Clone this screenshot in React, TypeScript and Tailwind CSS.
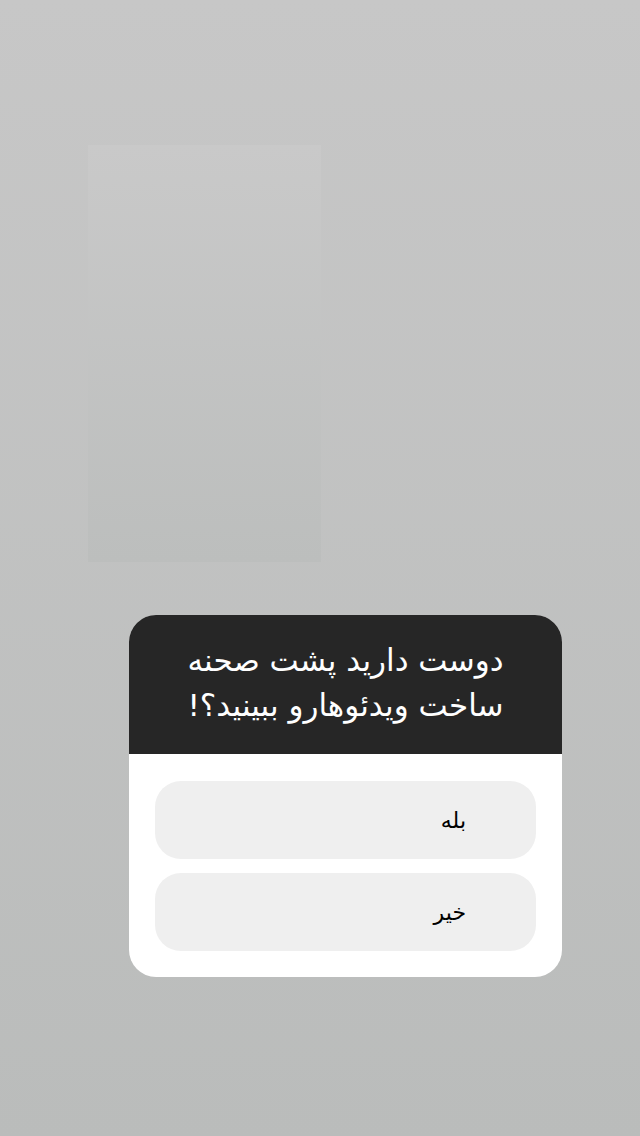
const options = ['بله', 'خیر'];

const App = () => {
  return (
    <div className="min-h-[1136px] w-[640px] bg-gradient-to-b from-[#c7c7c7] to-[#babcbb] pt-[145px] pl-[88px]">
      {/* faded media frame behind the sticker */}
      <div className="w-[233px] h-[417px] bg-gradient-to-b from-[#c9c9c9] to-[#bcbebd]" />

      {/* question sticker */}
      <div
        dir="rtl"
        className="mt-[53px] ml-[41px] w-[433px] rounded-[27px] overflow-hidden bg-white"
        style={{ fontFamily: '"DejaVu Sans", sans-serif' }}
      >
        <div className="h-[139px] bg-[#262626] flex flex-col items-center justify-center pb-[4px]">
          <p className="text-white text-[31px] leading-[45px] text-center">
            دوست دارید پشت صحنه
            <br />
            ساخت ویدئوهارو ببینید؟!
          </p>
        </div>
        <div className="px-[26px] pt-[27px] pb-[26px] flex flex-col gap-[14px]">
          {options.map((label) => (
            <div
              key={label}
              className="h-[78px] rounded-[26px] bg-[#efefef] flex items-center pr-[70px] text-[22px] text-black"
            >
              {label}
            </div>
          ))}
        </div>
      </div>
    </div>
  );
};

export default App;
